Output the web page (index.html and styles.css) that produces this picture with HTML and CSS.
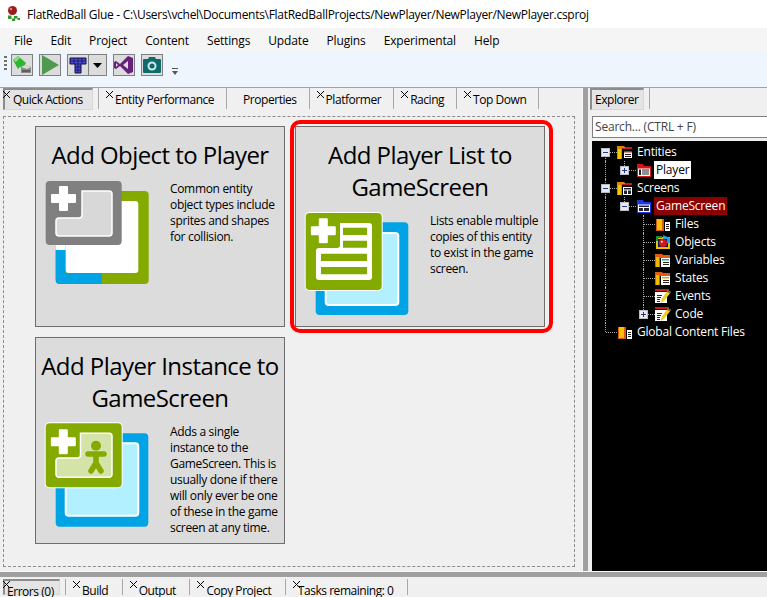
FILE: index.html
```html
<!DOCTYPE html>
<html lang="en">
<head>
<meta charset="utf-8">
<title>FlatRedBall Glue</title>
<link rel="stylesheet" href="styles.css">
</head>
<body>
<svg class="defs" width="0" height="0" aria-hidden="true">
  <symbol id="plus" viewBox="0 0 26 26"><path d="M8.500 1.500a1 1 0 0 1 1-1h7a1 1 0 0 1 1 1v7h7a1 1 0 0 1 1 1v7a1 1 0 0 1-1 1h-7v7a1 1 0 0 1-1 1h-7a1 1 0 0 1-1-1v-7h-7a1 1 0 0 1-1-1v-7a1 1 0 0 1 1-1h7z" fill="#fff"/></symbol>
  <symbol id="f-list" viewBox="0 0 16 16"><path d="M0 2h7l1 1h7v2H5v10H0z" fill="#d8860a"/><path d="M8 3h7v2H5V4h3z" fill="#c81c1c"/><path d="M1 5h3v10H1z" fill="#f7c400"/><path d="M6 6h9v9H6z" fill="#000"/><path d="M7 7h8v7H7z" fill="#fff"/><path d="M7 7h8v1.500H7z" fill="#c81c1c"/><path d="M8 10h6v1H8zM8 12h6v1H8z" fill="#222"/></symbol>
  <symbol id="f-screen" viewBox="0 0 16 16"><path d="M0 2h7l1 1h7v2H5v10H0z" fill="#d8860a"/><path d="M8 3h7v2H5V4h3z" fill="#c81c1c"/><path d="M1 5h3v10H1z" fill="#f7c400"/><path d="M6 7h9v8H6z" fill="#fff"/><path d="M7 8h7v1.500H7zM7 10.500h3V14H7zM11 10.500h3V14h-3z" fill="#223"/></symbol>
  <symbol id="entity" viewBox="0 0 16 16"><path d="M1 2h6l1 2h7v11H1z" fill="#d01818"/><path d="M2 6.500h12V14H2z" fill="#fff"/><path d="M3 7.500h2V13H3zM6 7.500h7v1H6zM6 9.500h7v1H6zM6 11.500h7v1H6z" fill="#222"/></symbol>
  <symbol id="screen" viewBox="0 0 16 16"><path d="M1 2h6l1 2h7v11H1z" fill="#1c38e0"/><path d="M2 6.500h12V14H2z" fill="#fff"/><path d="M3 7.500h10v1.500H3zM3 10h4v3H3zM8 10h5v3H8z" fill="#223"/></symbol>
  <symbol id="files" viewBox="0 0 16 16"><path d="M1 3h8v12H1z" fill="#d85a10"/><path d="M2 3h5v11H2z" fill="#f7c000"/><path d="M10 6h5v9h-5z" fill="#fff"/><path d="M11 8h3v1h-3zM11 10h3v1h-3zM11 12h3v1h-3z" fill="#222"/></symbol>
  <symbol id="objects" viewBox="0 0 16 16"><path d="M1 3h14v12H1z" fill="#e8c400"/><path d="M3 5h10v8H3z" fill="#0a1a4a"/><path d="M8 1l7 3v5h-3V5H8z" fill="#19a0e8"/><path d="M1 2h6v2H3v3H1z" fill="#1c8c3c"/><circle cx="8" cy="9" r="4" fill="#d01818"/><circle cx="6.800" cy="7.800" r="1" fill="#fff"/></symbol>
  <symbol id="vars" viewBox="0 0 16 16"><path d="M0 2h7l1 1h7v3H5v9H0z" fill="#e05a10"/><path d="M1 5h3v10H1z" fill="#f5b800"/><path d="M6 6h9v9H6z" fill="#fff"/><path d="M7 7h7v1.500H7z" fill="#17a8a0"/><path d="M8 10h6v1H8zM8 12h6v1H8z" fill="#222"/></symbol>
  <symbol id="states" viewBox="0 0 16 16"><path d="M0 2h7l1 1h7v3H5v9H0z" fill="#e05a10"/><path d="M1 5h3v10H1z" fill="#f5b800"/><path d="M6 6h9v9H6z" fill="#fff"/><path d="M7 7h7v1.500H7z" fill="#e8a000"/><path d="M8 10h6v1H8zM8 12h6v1H8z" fill="#222"/></symbol>
  <symbol id="pencil" viewBox="0 0 16 16"><path d="M0 1h14v2H0z" fill="#d01818"/><path d="M0 4h12v11H0z" fill="#fff"/><path d="M2 7h5v1H2zM2 9h4v1H2zM2 11h3v1H2zM2 13h3v1H2z" fill="#222"/><path d="M13 2l3 2-7 9-3 2 .5-4z" fill="#f2d020"/><path d="M13 2l3 2-1 1.500-3-2z" fill="#555"/></symbol>
</svg>

<div class="app">
  <header class="titlebar">
    <svg class="appicon" width="16" height="16" viewBox="0 0 16 16"><circle cx="5.500" cy="4.500" r="4.500" fill="#9c1c1c"/><circle cx="4" cy="3" r="1.300" fill="#e08080"/><path d="M1 9.500h3.500V13H1zM7 10h3.500v2.500H7zM5 12.500h3V15H5zM10.500 12h2.500v2h-2.500z" fill="#2a9a2a"/></svg>
    <span>FlatRedBall Glue - C:\Users\vchel\Documents\FlatRedBallProjects/NewPlayer/NewPlayer/NewPlayer.csproj</span>
  </header>

  <nav class="menubar">
    <span>File</span><span>Edit</span><span>Project</span><span>Content</span><span>Settings</span><span>Update</span><span>Plugins</span><span>Experimental</span><span>Help</span>
  </nav>

  <div class="toolbar">
    <span class="grip"></span>
    <button class="tool" aria-label="Build">
      <svg width="20" height="20" viewBox="0 0 20 20"><path d="M1 5l5-4 8 7-3 5-3-1-2 2z" fill="#2fb52f"/><path d="M1 5l5-4 2 2-4 4z" fill="#7fe07f"/><path d="M9 12l4-2 6 2v6H9z" fill="#8a8a8a"/><path d="M9 12l4-2 6 2-4 2z" fill="#d8d8d8"/><path d="M10 16h8" stroke="#333"/></svg>
    </button>
    <button class="tool" aria-label="Run">
      <svg width="20" height="20" viewBox="0 0 20 20"><path d="M2 0l17 10L2 20z" fill="#4f9a4f"/></svg>
    </button>
    <div class="split">
      <button class="tool" aria-label="Tile">
        <svg width="20" height="20" viewBox="0 0 20 20"><path d="M2 3h16v6h-5v9H7V9H2z" fill="#4a4ad8" stroke="#101040"/><path d="M2 6h16M7 9h6M7 12h6M7 15h6M6 3v6M10 3v15M14 3v6" stroke="#101040" stroke-width=".7" fill="none"/></svg>
      </button>
      <button class="tool caret" aria-label="More">
        <svg width="9" height="5" viewBox="0 0 9 5"><path d="M0 0h9L4.500 5z" fill="#000"/></svg>
      </button>
    </div>
    <button class="tool" aria-label="Visual Studio">
      <svg width="20" height="20" viewBox="0 0 20 20"><path d="M14 1l5 2v14l-5 2-8-8-4 3-2-1V7l2-1 4 3zM14 6l-5 4 5 4zM2 8v4l2-2z" fill="#68217a" fill-rule="evenodd"/></svg>
    </button>
    <button class="tool" aria-label="Screenshot">
      <svg width="20" height="20" viewBox="0 0 20 20"><path d="M1 5a1 1 0 0 1 1-1h4l1-2h6l1 2h4a1 1 0 0 1 1 1v12a1 1 0 0 1-1 1H2a1 1 0 0 1-1-1z" fill="#0f6b6b"/><circle cx="10" cy="11" r="4.500" fill="#cfe8e8"/><circle cx="10" cy="11" r="2.500" fill="#0f6b6b"/></svg>
    </button>
    <svg class="overflow" width="6" height="7" viewBox="0 0 6 7"><path d="M0 0h6v1H0zM0 3h6L3 7z" fill="#555"/></svg>
  </div>

  <div class="main">
    <section class="left">
      <div class="tabs">
        <div class="tab active"><i class="x"></i>Quick Actions</div>
        <div class="tab"><i class="x"></i>Entity Performance</div>
        <div class="tab">Properties</div>
        <div class="tab"><i class="x"></i>Platformer</div>
        <div class="tab"><i class="x"></i>Racing</div>
        <div class="tab"><i class="x"></i>Top Down</div>
      </div>
      <div class="actions">
        <article class="card">
          <h2>Add Object to Player</h2>
          <div class="card-body">
            <svg class="art" width="105" height="106" viewBox="0 0 105 106">
              <rect x="10.700" y="10" width="93" height="93" rx="4" fill="#84aa00"/>
              <path d="M10.700 69h10v23h36v11H14.700a4 4 0 0 1-4-4z" fill="#00a4e4"/>
              <rect x="20.700" y="20" width="72.600" height="72" rx="3" fill="#fff"/>
              <rect x="10.700" y="60" width="10" height="9" fill="#fff"/>
              <rect x=".7" y="0" width="76" height="64" rx="4" fill="#808080"/>
              <path d="M37 10h27a3 3 0 0 1 3 3v39a3 3 0 0 1-3 3H14a3 3 0 0 1-3-3V40a3 3 0 0 1 3-3h20a3 3 0 0 0 3-3z" fill="#d8d8d8" stroke="#fff" stroke-width="1.500"/>
              <use href="#plus" x="5.500" y="4.500" width="26" height="26"/>
            </svg>
            <p>Common entity<br>object types include<br>sprites and shapes<br>for collision.</p>
          </div>
        </article>

        <article class="card hl">
          <h2>Add Player List to<br>GameScreen</h2>
          <div class="card-body">
            <svg class="art" width="105" height="106" viewBox="0 0 105 106">
              <rect x="10.700" y="9.300" width="92.600" height="92.700" rx="4" fill="#00a4e4"/>
              <rect x="20.700" y="20" width="72.600" height="72" rx="3" fill="#b3f0ff" stroke="#fff" stroke-width="2"/>
              <rect x="-.3" y="-1" width="78" height="79" rx="5" fill="#fff"/>
              <rect x=".7" y="0" width="76" height="77" rx="4" fill="#84aa00"/>
              <path d="M35 10h29a3 3 0 0 1 3 3v51a3 3 0 0 1-3 3H14a3 3 0 0 1-3-3V38a3 3 0 0 1 3-3h18a3 3 0 0 0 3-3z" fill="#fff"/>
              <path d="M38 14.700h24V22H38zM38 27.700h24v7H38zM16 40.700h46V48H16zM16 54h46v7.300H16z" fill="#84aa00"/>
              <use href="#plus" x="5.300" y="4.700" width="26" height="26"/>
            </svg>
            <p>Lists enable multiple<br>copies of this entity<br>to exist in the game<br>screen.</p>
          </div>
        </article>

        <article class="card">
          <h2>Add Player Instance to<br>GameScreen</h2>
          <div class="card-body">
            <svg class="art" width="105" height="106" viewBox="0 1 105 106">
              <rect x="10.700" y="10.300" width="92.600" height="93.400" rx="4" fill="#00a4e4"/>
              <rect x="20.700" y="20.300" width="72.600" height="72.400" rx="3" fill="#b3f0ff" stroke="#fff" stroke-width="2"/>
              <rect x="-.3" y="-.7" width="78" height="66" rx="5" fill="#fff"/>
              <rect x=".7" y=".3" width="76" height="64" rx="4" fill="#84aa00"/>
              <path d="M35.500 10.300H64a3 3 0 0 1 3 3v38a3 3 0 0 1-3 3H14a3 3 0 0 1-3-3V38a3 3 0 0 1 3-3h18.500a3 3 0 0 0 3-3z" fill="#d4e3a8" stroke="#fff" stroke-width="1.500"/>
              <circle cx="51" cy="22.700" r="5" fill="#84aa00"/>
              <path d="M43 31h16M51 31v9M51 40l-5 8M51 40l5 8" stroke="#84aa00" stroke-width="5.500" stroke-linecap="round" fill="none"/>
              <use href="#plus" x="5.300" y="5.700" width="26" height="26"/>
            </svg>
            <p>Adds a single<br>instance to the<br>GameScreen. This is<br>usually done if there<br>will only ever be one<br>of these in the game<br>screen at any time.</p>
          </div>
        </article>
      </div>
    </section>

    <div class="vsplit"></div>

    <aside class="right">
      <div class="tabs explorer-tabs">
        <div class="tab active">Explorer</div>
      </div>
      <div class="search">Search... (CTRL + F)</div>
      <div class="tree">
        <div class="row"><span class="c d h"><i class="box minus"></i></span><svg class="ti"><use href="#f-list"/></svg><span class="lbl">Entities</span></div>
        <div class="row"><span class="c v"></span><span class="c u h"><i class="box plus"></i></span><svg class="ti"><use href="#entity"/></svg><span class="lbl sel">Player</span></div>
        <div class="row"><span class="c v h"><i class="box minus"></i></span><svg class="ti"><use href="#f-screen"/></svg><span class="lbl">Screens</span></div>
        <div class="row"><span class="c v"></span><span class="c u h"><i class="box minus"></i></span><svg class="ti"><use href="#screen"/></svg><span class="lbl cur">GameScreen</span></div>
        <div class="row"><span class="c v"></span><span class="c"></span><span class="c v h"></span><svg class="ti"><use href="#files"/></svg><span class="lbl">Files</span></div>
        <div class="row"><span class="c v"></span><span class="c"></span><span class="c v h"></span><svg class="ti"><use href="#objects"/></svg><span class="lbl">Objects</span></div>
        <div class="row"><span class="c v"></span><span class="c"></span><span class="c v h"></span><svg class="ti"><use href="#vars"/></svg><span class="lbl">Variables</span></div>
        <div class="row"><span class="c v"></span><span class="c"></span><span class="c v h"></span><svg class="ti"><use href="#states"/></svg><span class="lbl">States</span></div>
        <div class="row"><span class="c v"></span><span class="c"></span><span class="c v h"></span><svg class="ti"><use href="#pencil"/></svg><span class="lbl">Events</span></div>
        <div class="row"><span class="c v"></span><span class="c"></span><span class="c u h"><i class="box plus"></i></span><svg class="ti"><use href="#pencil"/></svg><span class="lbl">Code</span></div>
        <div class="row"><span class="c u h"></span><svg class="ti"><use href="#files"/></svg><span class="lbl">Global Content Files</span></div>
      </div>
    </aside>
  </div>

  <div class="hsplit"></div>

  <footer class="tabs bottom-tabs">
    <div class="tab active"><i class="x"></i>Errors (0)</div>
    <div class="tab"><i class="x"></i>Build</div>
    <div class="tab"><i class="x"></i>Output</div>
    <div class="tab"><i class="x"></i>Copy Project</div>
    <div class="tab tight"><i class="x"></i>Tasks remaining: 0</div>
  </footer>
</div>
</body>
</html>
```

FILE: styles.css
```css
* { box-sizing: border-box; }
html, body { margin: 0; padding: 0; }
body { font-family: "Open Sans", "Noto Sans", "Liberation Sans", sans-serif; font-size: 12px; color: #000; background: #f0f0f0; }
.defs { position: absolute; }
.app { width: 767px; height: 597px; overflow: hidden; display: flex; flex-direction: column; }

.titlebar { height: 28px; background: #fff; display: flex; align-items: center; padding-left: 7px; gap: 4px; flex: none; letter-spacing: -.29px; }
.appicon { flex: none; }

.menubar { height: 24px; background: #f5f5f5; display: flex; align-items: center; gap: 18px; padding-left: 14px; flex: none; letter-spacing: -.15px; }

.toolbar { height: 36px; background: #eff5fd; display: flex; align-items: flex-start; padding: 2px 0 0 4px; flex: none; border-bottom: 1px solid #a0a0a0; gap: 6px; }
.grip { width: 3px; height: 16px; margin: 2px -2px 0 0; background: repeating-linear-gradient(to bottom, #707070 0 2px, transparent 2px 4px); }
.tool { width: 22px; height: 22px; padding: 0; background: #dcdcdc; border: 1px solid #808080; display: flex; align-items: center; justify-content: center; flex: none; }
.split { display: flex; }
.caret { width: 19px; margin-left: -1px; }
.overflow { margin: 14px 0 0 3px; }

.main { flex: 1; display: flex; min-height: 0; }
.left { width: 582px; flex: none; display: flex; flex-direction: column; }
.vsplit { width: 6px; flex: none; background: #a0a0a0; border-left: 1px solid #f8f8f8; }
.right { flex: 1; display: flex; flex-direction: column; min-width: 0; padding-left: 4px; }

.tabs { display: flex; height: 23px; flex: none; padding-left: 3px; background: #f0f0f0; }
.tab { position: relative; height: 21px; padding: 2px 12px 0 16px; line-height: 20px; white-space: nowrap; border-right: 1px solid #a8a8a8; letter-spacing: -.46px; flex: none; }
.tab.active { padding-left: 8px; width: 90px; margin-right: 5px; background: #e4e4e4; border: 1px solid #a8a8a8; border-right-color: #d8d8d8; border-bottom-color: #d8d8d8; border-top: 2px solid #8c8c8c; border-left: 2px solid #8c8c8c; padding-top: 0; height: 22px; }
.tab.active + .tab { border-left: 1px solid #a8a8a8; }
.x { position: absolute; left: 7px; top: 3px; width: 7px; height: 7px; background:
  linear-gradient(45deg, transparent 46%, #000 46% 54%, transparent 54%),
  linear-gradient(-45deg, transparent 46%, #000 46% 54%, transparent 54%); }
.tab.active .x { left: -2px; top: 1px; }

.actions { margin: 5px 7px 0 3px; height: 451px; border: 1px dashed #8c8c8c; padding: 9px 0 0 31px; display: flex; flex-wrap: wrap; gap: 10px; align-content: flex-start; }
.card { position: relative; width: 250px; background: #dcdcdc; border: 1px solid #6e6e6e; padding-bottom: 7px; }
.card h2 { margin: 12px 0 10px; font-size: 24px; line-height: 32px; font-weight: 400; text-align: center; letter-spacing: -.56px; }
.card-body { display: flex; align-items: flex-start; padding-left: 9px; gap: 20px; }
.art { flex: none; overflow: visible; }
.card p { margin: 0; line-height: 16px; white-space: nowrap; letter-spacing: -.33px; }
.hl::after { content: ""; position: absolute; left: -6px; top: -7px; right: -9px; bottom: -7px; border: 4px solid #f00; border-radius: 10px; }

.explorer-tabs { padding-left: 0; margin-left: -2px; }
.explorer-tabs .tab { width: 54px; margin-right: 5px; padding-left: 3px; }
.explorer-tabs::after { content: ""; height: 21px; border-left: 1px solid #a8a8a8; }
.search { height: 22px; margin: 5px 0 3px; background: #fff; border: 1px solid #808080; border-right: 0; padding-left: 2px; line-height: 20px; color: #444; letter-spacing: -.2px; }
.tree { flex: 1; background: #000; padding: 2px 0 0 4px; color: #fff; }
.row { height: 18px; display: flex; align-items: center; }
.c { position: relative; width: 19px; height: 18px; flex: none; }
.c.v::before, .c.u::before, .c.d::before { content: ""; position: absolute; left: 9px; border-left: 1px dotted #aaa; }
.c.v::before { top: 0; bottom: 0; }
.c.u::before { top: 0; height: 9px; }
.c.d::before { top: 9px; bottom: 0; }
.c.h::after { content: ""; position: absolute; left: 10px; right: -2px; top: 9px; border-top: 1px dotted #aaa; }
.box { position: absolute; z-index: 1; left: 5px; top: 5px; width: 9px; height: 9px; background: #e8e8ee; border: 1px solid #bcbcc4; }
.box::before { content: ""; position: absolute; left: 1px; right: 1px; top: 3px; height: 1px; background: #24388c; }
.box.plus::after { content: ""; position: absolute; top: 1px; bottom: 1px; left: 3px; width: 1px; background: #24388c; }
.ti { width: 16px; height: 16px; flex: none; margin-left: 2px; }
.lbl { margin-left: 2px; padding: 0 2px; height: 18px; line-height: 18px; white-space: nowrap; letter-spacing: -.2px; }
.lbl.sel { background: #fff; color: #000; }
.lbl.cur { background: #8b0000; color: #fff; }

.hsplit { height: 6px; flex: none; background: #a0a0a0; border-top: 1px solid #f8f8f8; }
.bottom-tabs { height: 18px; padding-top: 0; padding-left: 3px; margin-top: 2px; }
.bottom-tabs .tab { height: 16px; padding: 2px 13.5px 0 16px; }
.bottom-tabs .tab.tight { padding-left: 12px; }
.bottom-tabs .tab .x { top: 2px; }
.bottom-tabs .tab.active { width: 57px; padding: 1px 0 0 2px; margin-right: 5px; height: 16px; }
.bottom-tabs .tab.active .x { left: -2px; top: 0; }
```
